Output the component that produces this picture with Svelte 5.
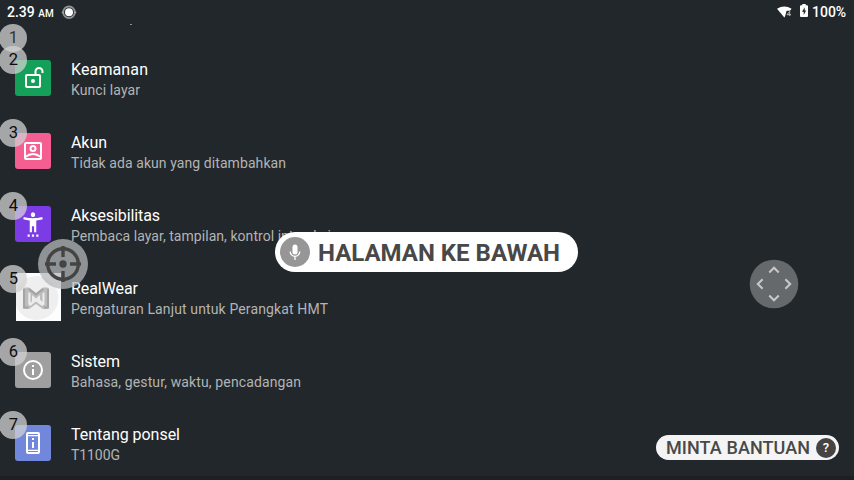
<script>
  const rows = [
    { icon: 'lock', color: '#15a05a', title: 'Keamanan', sub: 'Kunci layar', tw: 77, sw: 69 },
    { icon: 'account', color: '#f55e91', title: 'Akun', sub: 'Tidak ada akun yang ditambahkan', tw: 36, sw: 215 },
    { icon: 'access', color: '#7b3ce6', title: 'Aksesibilitas', sub: 'Pembaca layar, tampilan, kontrol interaksi', tw: 89, sw: 260 },
    { icon: 'brand', color: '#fdfdfd', title: 'RealWear', sub: 'Pengaturan Lanjut untuk Perangkat HMT', tw: 67, sw: 257 },
    { icon: 'info', color: '#9f9f9f', title: 'Sistem', sub: 'Bahasa, gestur, waktu, pencadangan', tw: 49, sw: 230 },
    { icon: 'phone', color: '#7087dc', title: 'Tentang ponsel', sub: 'T1100G', tw: 109, sw: 49 }
  ];
</script>

<div class="screen">
  <header>
    <span class="time">2.39 <small>AM</small></span>
    <svg class="ring" width="16" height="16" viewBox="0 0 16 16">
      <circle cx="8" cy="8.300" r="5.800" fill="none" stroke="#8f9394" stroke-width="1.800" />
      <path d="M0.8 8.500h2M13.200 8.500h2" stroke="#a9acad" stroke-width="1.300" />
      <circle cx="8" cy="8.300" r="4" fill="#fff" />
    </svg>
    <span class="space"></span>
    <svg class="wifi" width="16" height="12" viewBox="0 0 16 12">
      <path d="M0 2.800Q7.300-2 14.600 2.800L13 4.800H9.600L8 10.500 7.300 11.500Z" fill="#fff" />
      <path d="M12.700 10V5.500L10 8.700h4" fill="none" stroke="#b5b8b9" stroke-width="1" />
    </svg>
    <svg class="battery" width="8" height="13" viewBox="0 0 8 13">
      <path d="M2.300 0h3.400v1.300H7q1 0 1 1V12q0 1-1 1H1q-1 0-1-1V2.300q0-1 1-1h1.300z" fill="#fff" />
      <path d="M4.700 3.200L2 7.700h1.700v3.200L6.200 6.500H4.700z" fill="#22272b" />
    </svg>
    <span class="pct">100%</span>
  </header>
  <span class="tail"></span>

  <main>
    <span class="badge first">1</span>
    {#each rows as r, i}
      <section class="row">
        <div class="tile" class:brand={r.icon === 'brand'} style="background:{r.color}">
          {#if r.icon === 'lock'}
            <svg width="24" height="24" viewBox="0 0 24 24" fill="none" stroke="#fff" stroke-width="2">
              <rect x="5" y="9" width="14" height="12" rx="1" /><path d="M14.500 9V5.500a3.500 3.500 0 0 1 7 0V7" /><circle cx="12" cy="15" r="2" fill="#fff" stroke="none" />
            </svg>
          {:else if r.icon === 'account'}
            <svg width="24" height="24" viewBox="0 0 24 24" fill="none" stroke="#fff" stroke-width="2">
              <rect x="4" y="4" width="16" height="16" rx="1" /><circle cx="12" cy="9.500" r="2.500" /><path d="M4.500 17.800Q12 12.200 19.500 17.800" />
            </svg>
          {:else if r.icon === 'access'}
            <svg width="26" height="28" viewBox="0 0 24 24" preserveAspectRatio="none" fill="#fff">
              <path d="M20.500 6c-2.610.7-5.670 1-8.500 1s-5.890-.3-8.500-1L3 8c1.860.5 4 .83 6 1v10h2v-5h2v5h2V9c2-.17 4.140-.5 6-1zM12 6c1.100 0 2-.9 2-2s-.9-2-2-2-2 .9-2 2 .9 2 2 2zM7 21h2v2H7zm4 0h2v2h-2zm4 0h2v2h-2z" />
            </svg>
          {:else if r.icon === 'brand'}
            <svg width="45" height="48" viewBox="0 0 45 48">
              <circle cx="20.500" cy="25" r="22" fill="#efefef" />
              <g class="mark">
                <path d="M7 15.500l2-1h4l7 5.500 7-5.500h4l2 1v19l-2 1.500h-4l-7-5-7 5H9l-2-1.500z" fill="#bcbcbc" />
                <path d="M12.300 19v12.500l2 1.500 5.700-4.500 6 4.500 2.500-1.500V19l-2 1.500V29l-2.500-2.500V22L20 25.500 16 22v6.500l-1.500 1V20.500z" fill="#ececec" />
                <path d="M8 16v18.500h4M32 16v18.500h-4M13 16l7 5.500 7-5.500" fill="none" stroke="#a3a3a3" stroke-width="2" />
              </g>
            </svg>
          {:else if r.icon === 'info'}
            <svg width="24" height="24" viewBox="0 0 24 24" fill="#fff">
              <circle cx="12" cy="12" r="9" fill="none" stroke="#fff" stroke-width="2" /><path d="M11 7h2v2h-2zM11 11h2v6h-2z" />
            </svg>
          {:else}
            <svg width="24" height="24" viewBox="0 0 24 24" fill="#fff">
              <rect x="6" y="2" width="12" height="20" rx="1" fill="none" stroke="#fff" stroke-width="2" /><path d="M6 4h12v1.200H6zM6 18.800h12V20H6zM11 7h2v2h-2zM11 11h2v6h-2z" />
            </svg>
          {/if}
          <span class="badge">{i + 2}</span>
        </div>
        <svg class="text" width="300" height="44">
          <text class="title" x="0" y="19" textLength={r.tw}>{r.title}</text>
          <text class="sub" x="0" y="39" textLength={r.sw}>{r.sub}</text>
        </svg>
      </section>
    {/each}
  </main>

  <svg class="target" width="50" height="50" viewBox="0 0 50 50">
    <circle cx="25" cy="25" r="25" fill="#b5b8b9" fill-opacity=".75" />
    <g fill="none" stroke="#444" stroke-width="3.400">
      <circle cx="25" cy="25" r="15.300" />
      <path d="M25 7v11M25 32v11M7 25h11M32 25h11" />
    </g>
    <circle cx="25" cy="25" r="3.700" fill="#444" />
  </svg>

  <div class="command">
    <svg width="30" height="30" viewBox="0 0 30 30">
      <circle cx="15" cy="15" r="15" fill="#969696" />
      <rect x="12.500" y="7.500" width="5" height="10" rx="2.500" fill="#fff" />
      <path d="M10.200 14.500a4.800 4.800 0 0 0 9.600 0M15 19.500V23" fill="none" stroke="#fff" stroke-width="1.300" />
    </svg>
    <svg width="244" height="40"><text x="0" y="29" textLength="242">HALAMAN KE BAWAH</text></svg>
  </div>

  <svg class="pad" width="50" height="50" viewBox="0 0 50 50">
    <circle cx="25" cy="25" r="24.300" fill="#65696b" />
    <path d="M20 13l5-5 5 5M20 37l5 5 5-5M13 20l-5 5 5 5M37 20l5 5-5 5" transform="translate(1.250 1.250) scale(.95)" fill="none" stroke="#c6c8c9" stroke-width="2.200" />
  </svg>

  <div class="help">
    <svg width="146" height="25"><text x="0" y="19" textLength="144">MINTA BANTUAN</text></svg>
    <span class="q">?</span>
  </div>
  <footer></footer>
</div>

<style>
  .screen { position: relative; display: flex; flex-direction: column; width: 854px; height: 480px; overflow: hidden; background: #22272b; color: #fff; font-family: Roboto, sans-serif; }
  header { display: flex; align-items: center; height: 24px; box-sizing: border-box; padding: 0 8px 0 7px; flex: none; }
  .time { font-size: 14px; font-weight: 500; width: 54px; white-space: nowrap; }
  .time small { font-size: 10px; }
  .space { flex: 1; }
  .wifi { margin-right: 7px; }
  .battery { margin-right: 4px; margin-bottom: 3px; }
  .pct { font-size: 14px; font-weight: 500; width: 34px; }
  .tail { position: absolute; left: 130px; top: 24px; width: 2px; height: 1px; background: #909395; }
  main { position: relative; flex: 1; padding-top: 17px; }
  .row { display: flex; align-items: center; height: 73px; padding-left: 15px; box-sizing: border-box; }
  .tile { position: relative; display: flex; align-items: center; justify-content: center; width: 36px; height: 36px; border-radius: 3px; flex: none; margin-right: 20px; }
  .tile.brand { width: 45px; height: 48px; margin-left: 1px; margin-right: 10px; border-radius: 0; }
  .mark { filter: blur(.6px); }
  .badge { position: absolute; left: -16px; top: -14px; width: 28px; height: 28px; border-radius: 50%; background: rgba(210, 210, 210, .75); color: #0c0c0c; font-size: 16.5px; line-height: 27px; text-indent: 1px; text-align: center; }
  .brand .badge { left: -17px; top: -8px; }
  .badge.first { left: -1px; top: 0; color: #333; }
  .text { display: block; overflow: visible; }
  .title { font-size: 16px; fill: #fff; }
  .sub { font-size: 14px; fill: #b2b4b5; }
  .target { position: absolute; left: 38px; top: 239px; }
  .command { position: absolute; left: 275px; top: 232px; display: flex; align-items: center; gap: 8px; width: 303px; height: 40px; box-sizing: border-box; padding-left: 5px; border-radius: 20px; background: #fff; }
  .command text { font-size: 24px; font-weight: 700; fill: #484848; }
  .pad { position: absolute; left: 749px; top: 259px; }
  .help { position: absolute; left: 656px; top: 435px; display: flex; align-items: center; width: 183px; height: 25px; box-sizing: border-box; padding: 0 3px 0 10px; justify-content: space-between; border-radius: 13px; background: #f4f4f4; }
  .help text { font-size: 18px; font-weight: 500; fill: #484848; }
  .q { width: 20px; height: 20px; border-radius: 50%; background: #444; font-size: 13px; font-weight: 500; line-height: 20px; text-align: center; }
  footer { position: absolute; left: 0; right: 0; bottom: 0; height: 4px; background: #1e1e25; }
</style>
